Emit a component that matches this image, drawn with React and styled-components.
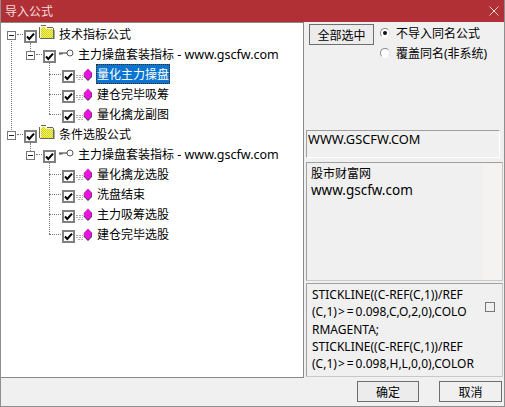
import React from 'react';
import styled, { createGlobalStyle } from 'styled-components';

const GlobalStyle = createGlobalStyle`
  html, body { margin: 0; padding: 0; background: #f0f0f0; }
  * { box-sizing: border-box; }
`;

const Dialog = styled.div`
  width: 505px;
  height: 407px;
  display: flex;
  flex-direction: column;
  background: #f0f0f0;
  border: 1px solid #8e8e8e;
  border-top: none;
  font-family: "Noto Sans", "Noto Sans CJK SC", sans-serif;
  font-size: 12px;
  color: #000;
  overflow: hidden;
`;

const TitleBar = styled.div`
  height: 22px;
  flex: none;
  margin: 0 -1px;
  padding: 0 6px 0 5px;
  display: flex;
  align-items: center;
  justify-content: space-between;
  background: #b03035;
  color: #f3dcdc;
`;

const Body = styled.div`
  height: 356px;
  flex: none;
  display: flex;
`;

const TreePanel = styled.div`
  width: 303px;
  flex: none;
  padding: 1px 0 0 5px;
  background: #fff;
  border: 1px solid #8a8a8a;
  border-left: none;
`;

const SidePanel = styled.div`
  flex: 1;
  display: flex;
  flex-direction: column;
  padding: 2px 0 0 2px;
`;

const TopControls = styled.div`
  height: 106px;
  flex: none;
  display: flex;
  gap: 6px;
  padding-left: 3px;
`;

const PushButton = styled.button`
  width: ${p => p.$w}px;
  height: 21px;
  padding: 0;
  font: inherit;
  color: #000;
  background: ${p => p.$flat ? '#f0f0f0' : '#ececec'};
  border: 1px solid #6e6e6e;
  border-radius: 0;
`;

const RadioList = styled.div`
  display: flex;
  flex-direction: column;
  gap: 3px;
`;

const RadioRow = styled.label`
  height: 17px;
  display: flex;
  align-items: center;
  gap: 6px;
  white-space: nowrap;
`;

const RadioDot = styled.span`
  width: 10px;
  height: 10px;
  flex: none;
  display: flex;
  align-items: center;
  justify-content: center;
  border-radius: 50%;
  background: #fff;
  border: 1px solid;
  border-color: #8a8a8a #e4e4e4 #fff #8a8a8a;

  &::after {
    content: '';
    width: 4px;
    height: 4px;
    border-radius: 50%;
    background: ${p => p.$on ? '#111' : 'transparent'};
  }
`;

const Latin = styled.span`
  font-size: ${p => p.$size}px;
`;

const UrlBox = styled.div`
  width: 194px;
  height: 28px;
  flex: none;
  padding: 0 1px;
  line-height: 16px;
  border: 1px solid #a0a0a0;
  border-right-color: #fff;
  border-bottom-color: #fff;
`;

const InfoBox = styled.div`
  width: 197px;
  height: 119px;
  flex: none;
  margin-top: 4px;
  padding: 2px 4px;
  line-height: 17px;
  background: linear-gradient(to right, #f0f0f0 176px, #f4f3f1 176px);
  border: 1px solid #a0a0a0;
  border-right-color: #c8c8c8;
  border-bottom-color: #c8c8c8;
`;

const CodeBox = styled.div`
  width: 197px;
  height: 94px;
  flex: none;
  margin-top: 2px;
  padding: 2px 4px 2px 5px;
  display: flex;
  justify-content: space-between;
  border: 1px solid #a0a0a0;
  border-right-color: #c8c8c8;
  border-bottom-color: #c8c8c8;
`;

const CodeText = styled.div`
  flex: none;
  line-height: 17.3px;
  white-space: nowrap;
`;

const Gte = styled.span`
  letter-spacing: 2px;
  margin-left: 1px;
`;

const Square = styled.span`
  width: 10px;
  height: 10px;
  flex: none;
  margin: 16px 3px 0 0;
  border: 1px solid #777;
`;

const Footer = styled.div`
  flex: 1;
  display: flex;
  justify-content: flex-end;
  gap: 20px;
  padding: 3px 2px 0 0;
`;

const Branch = styled.div`
  position: relative;
`;

// vertical dotted connector of a tree level
const VLine = styled.span`
  position: absolute;
  left: ${p => p.$x}px;
  top: ${p => p.$top}px;
  height: ${p => p.$h}px;
  border-left: 1px dotted #777;
`;

const Row = styled.div`
  position: relative;
  height: 20px;
  display: flex;
  align-items: center;
  margin-left: ${p => p.$indent}px;
  white-space: nowrap;

  &::before {
    content: '';
    position: absolute;
    left: ${p => p.$leaf ? -13 : 11}px;
    width: ${p => p.$leaf ? 12 : 6}px;
    top: 10px;
    border-top: 1px dotted #777;
  }
`;

const Expander = styled.span`
  position: relative;
  width: 9px;
  height: 9px;
  flex: none;
  margin: 2px 8px 0 1px;
  background: #fff;
  border: 1px solid #777;

  &::after {
    content: '';
    position: absolute;
    left: 1px;
    top: 3px;
    width: 5px;
    height: 1px;
    background: #222;
  }
`;

const Check = styled.span`
  width: 13px;
  height: 13px;
  flex: none;
  margin-top: 5px;
  display: flex;
  background: #fff;
  border: 2px solid #808080;
`;

const Label = styled.span`
  height: 20px;
  line-height: 21px;
  padding: 0 1px;
  margin-left: ${p => p.$gap}px;
  color: ${p => p.$selected ? '#fff' : '#000'};
  background: ${p => p.$selected ? '#0a74d0' : 'transparent'};
  outline: ${p => p.$selected ? '1px dotted #3a2a10' : 'none'};
  outline-offset: -1px;
`;

const IconSlot = styled.span`
  display: flex;
  flex: none;
  margin: ${p => p.$margin};
`;

const CheckMark = () => (
  <svg width="9" height="9" viewBox="0 0 9 9" fill="none">
    <path d="M1 4.5L3.3 7L8 1.6" stroke="#000" strokeWidth="2" />
  </svg>
);

const FolderIcon = ({ id }) => (
  <IconSlot $margin="-4px 0 0 2px">
    <svg width="16" height="14" viewBox="0 0 16 14" shapeRendering="crispEdges">
      <defs>
        <pattern id={id} width="2" height="2" patternUnits="userSpaceOnUse">
          <rect width="2" height="2" fill="#ffff20" />
          <rect width="1" height="1" fill="#c8c860" />
          <rect x="1" y="1" width="1" height="1" fill="#c8c860" />
        </pattern>
      </defs>
      <path d="M1 13V2h1V1h5v1h1v1h6v10z" fill={`url(#${id})`} />
      <path d="M1.5 13V2.5h1v-1h4v1h1v1h6" stroke="#f4f4e0" fill="none" />
      <path d="M.5 13V2M2 .5h5M8 2.5h6M14.5 3v11M1 13.5h14" stroke="#666" fill="none" />
      <path d="M15.5 5v9" stroke="#aaa" />
    </svg>
  </IconSlot>
);

const KeyIcon = () => (
  <IconSlot $margin="-2px 0 0 2px">
    <svg width="16" height="10" viewBox="0 0 16 10" fill="none">
      <circle cx="12" cy="5" r="3" stroke="#555" fill="#fff" />
      <path d="M1 5h8M2 5v2M4 5v1.5" stroke="#333" />
    </svg>
  </IconSlot>
);

const GemIcon = () => (
  <IconSlot $margin="1px 0 0 1px">
    <svg width="16" height="14" viewBox="0 0 16 14">
      <path d="M0 7.5h7M0 9.5h7M2 11.5h5" stroke="#aaa" strokeDasharray="2 1" />
      <path d="M12 .8L16 5v3.2l-4 4.2-4-4.2V5z" fill="#f30fe0" stroke="#9a4a9a" strokeWidth=".6" />
      <path d="M8 8.2l4 4.2 4-4.2V5" stroke="#4a2a5a" fill="none" />
      <path d="M8.5 5.5L12 7.5l3.5-2" stroke="#c020c0" strokeWidth=".6" fill="none" />
    </svg>
  </IconSlot>
);

const groups = [
  {
    id: 'dither-a',
    name: '技术指标公式',
    items: ['量化主力操盘', '建仓完毕吸筹', '量化擒龙副图'],
  },
  {
    id: 'dither-b',
    name: '条件选股公式',
    items: ['量化擒龙选股', '洗盘结束', '主力吸筹选股', '建仓完毕选股'],
  },
];

const TreeGroup = ({ group, selected, trailing }) => (
  <Branch>
    {trailing && <VLine $x={5} $top={15} $h={91} />}
    <VLine $x={24} $top={19} $h={8} />
    <VLine $x={43} $top={39} $h={group.items.length * 20 - 9} />
    <Row $indent={0}>
      <Expander />
      <Check><CheckMark /></Check>
      <FolderIcon id={group.id} />
      <Label $gap={3}>{group.name}</Label>
    </Row>
    <Row $indent={19}>
      <Expander />
      <Check><CheckMark /></Check>
      <KeyIcon />
      <Label $gap={3}>主力操盘套装指标<Latin $size={12.5}> - www.gscfw.com</Latin></Label>
    </Row>
    {group.items.map(item => (
      <Row $indent={56} $leaf key={item}>
        <Check><CheckMark /></Check>
        <GemIcon />
        <Label $gap={4} $selected={item === selected}>{item}</Label>
      </Row>
    ))}
  </Branch>
);

const App = () => (
  <>
    <GlobalStyle />
    <Dialog>
      <TitleBar>
        <span>导入公式</span>
        <svg width="10" height="10" viewBox="0 0 10 10">
          <path d="M.5.5l9 9M9.5.5l-9 9" stroke="#efd5d5" />
        </svg>
      </TitleBar>
      <Body>
        <TreePanel>
          <TreeGroup group={groups[0]} selected="量化主力操盘" trailing />
          <TreeGroup group={groups[1]} />
        </TreePanel>
        <SidePanel>
          <TopControls>
            <PushButton $w={65}>全部选中</PushButton>
            <RadioList>
              <RadioRow><RadioDot $on />不导入同名公式</RadioRow>
              <RadioRow><RadioDot />覆盖同名(非系统)</RadioRow>
            </RadioList>
          </TopControls>
          <UrlBox><Latin $size={12.8}>WWW.GSCFW.COM</Latin></UrlBox>
          <InfoBox>
            股市财富网<br /><Latin $size={13.5}>www.gscfw.com</Latin>
          </InfoBox>
          <CodeBox>
            <CodeText>
              STICKLINE((C-REF(C,1))/REF<br />
              (C,1)<Gte>&gt;=</Gte>0.098,C,O,2,0),COLO<br />
              RMAGENTA;<br />
              STICKLINE((C-REF(C,1))/REF<br />
              (C,1)<Gte>&gt;=</Gte>0.098,H,L,0,0),COLOR
            </CodeText>
            <Square />
          </CodeBox>
        </SidePanel>
      </Body>
      <Footer>
        <PushButton $w={62}>确定</PushButton>
        <PushButton $w={63} $flat>取消</PushButton>
      </Footer>
    </Dialog>
  </>
);

export default App;
